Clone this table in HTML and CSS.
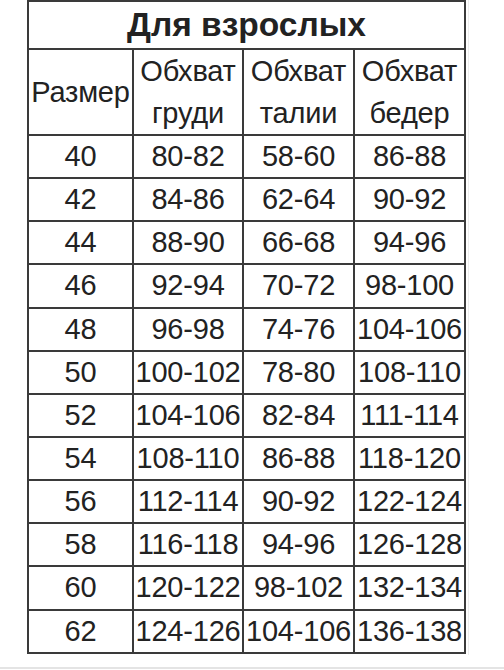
FILE: index.html
```html
<!DOCTYPE html>
<html lang="ru">
<head>
<meta charset="utf-8">
<link rel="stylesheet" href="styles.css">
</head>
<body>
<div class="page">
<table class="sizes">
  <colgroup>
    <col class="c1"><col class="c2"><col class="c3"><col class="c4">
  </colgroup>
  <tr class="title-row"><th colspan="4" class="title">Для взрослых</th></tr>
  <tr class="head-row">
    <td>Размер</td>
    <td>Обхват<br>груди</td>
    <td>Обхват<br>талии</td>
    <td>Обхват<br>бедер</td>
  </tr>
  <tr><td>40</td><td>80-82</td><td>58-60</td><td>86-88</td></tr>
  <tr><td>42</td><td>84-86</td><td>62-64</td><td>90-92</td></tr>
  <tr><td>44</td><td>88-90</td><td>66-68</td><td>94-96</td></tr>
  <tr><td>46</td><td>92-94</td><td>70-72</td><td>98-100</td></tr>
  <tr><td>48</td><td>96-98</td><td>74-76</td><td>104-106</td></tr>
  <tr><td>50</td><td>100-102</td><td>78-80</td><td>108-110</td></tr>
  <tr><td>52</td><td>104-106</td><td>82-84</td><td>111-114</td></tr>
  <tr><td>54</td><td>108-110</td><td>86-88</td><td>118-120</td></tr>
  <tr><td>56</td><td>112-114</td><td>90-92</td><td>122-124</td></tr>
  <tr><td>58</td><td>116-118</td><td>94-96</td><td>126-128</td></tr>
  <tr><td>60</td><td>120-122</td><td>98-102</td><td>132-134</td></tr>
  <tr><td>62</td><td>124-126</td><td>104-106</td><td>136-138</td></tr>
</table>
<div class="edge-right"></div>
</div>
<div class="edge-bottom"></div>
</body>
</html>
```

FILE: styles.css
```css
html, body {
  margin: 0;
  padding: 0;
  background: #ffffff;
}
body {
  width: 504px;
  height: 670px;
  overflow: hidden;
  font-family: "Liberation Sans", Arial, sans-serif;
  color: #222222;
}
.page {
  display: flex;
  align-items: flex-start;
  height: 667px;
}
.sizes {
  margin-left: 27px;
  border-collapse: collapse;
  table-layout: fixed;
  width: 437px;
}
.c1 { width: 105px; }
.c2 { width: 110px; }
.c3 { width: 111px; }
.c4 { width: 111px; }
.sizes td, .sizes th {
  border: 2px solid #3a3a3a;
  padding: 0;
  text-align: center;
  vertical-align: middle;
  font-size: 29px;
  font-weight: normal;
  line-height: 41px;
  height: 41.15px;
  white-space: nowrap;
  overflow: visible;
  letter-spacing: -0.2px;
}
.sizes .title {
  font-weight: bold;
  font-size: 33.5px;
  height: 46px;
  line-height: 46px;
  color: #222222;
  letter-spacing: 0;
}
.head-row td {
  height: 84px;
  line-height: 42px;
}
.edge-right {
  width: 1px;
  height: 655px;
  margin-left: 2px;
  background: #ececec;
}
.edge-bottom {
  height: 2px;
  background: #e4e4e4;
}
```
